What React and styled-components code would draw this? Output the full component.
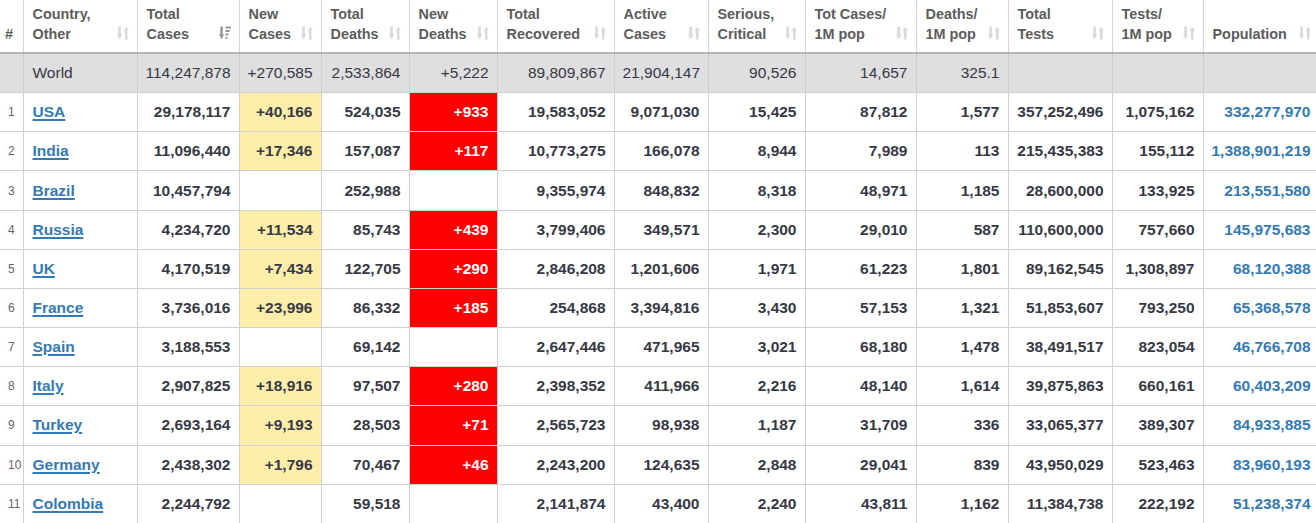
import styled, { createGlobalStyle } from "styled-components";

const Global = createGlobalStyle`
  html, body {
    margin: 0;
    padding: 0;
    background: #fff;
    overflow: hidden;
  }
  body {
    font-family: "Liberation Sans", Arial, sans-serif;
  }
`;

const Tabla = styled.table`
  width: 1319px;
  table-layout: fixed;
  border-collapse: collapse;
  font-family: "Liberation Sans", Arial, sans-serif;
`;

const Cabecera = styled.th`
  height: 40px;
  padding: 4px 8px 8px ${(p) => (p.$num ? "5px" : "9px")};
  border-left: 1px solid #d6d6d6;
  border-bottom: 2px solid #b4b4b4;
  vertical-align: bottom;
  text-align: left;
  font-size: 14.4px;
  font-weight: 700;
  line-height: 20px;
  color: #5c5c5c;

  &:first-child {
    border-left: none;
  }
`;

const CntCabecera = styled.div`
  display: flex;
  align-items: flex-end;
  justify-content: space-between;
  gap: 4px;

  svg {
    flex-shrink: 0;
    margin-bottom: 4px;
  }
`;

const Fila = styled.tr`
  background: ${(p) => (p.$mundo ? "#dfdfdf" : "#fff")};
`;

const Celda = styled.td`
  height: 38.17px;
  padding: 0 8px;
  border: 1px solid #cfcfcf;
  border-top: none;
  vertical-align: middle;
  text-align: right;
  white-space: nowrap;
  font-size: 15.5px;
  line-height: 18px;
  font-weight: ${(p) => (p.$mundo ? 400 : 700)};
  color: ${(p) => (p.$rojo ? "#fff" : "#363945")};
  background: ${(p) => (p.$rojo ? "#ff0000" : p.$amarillo ? "#ffeeaa" : "transparent")};

  &:first-child {
    border-left: none;
  }
`;

const Numero = styled.td`
  padding: 0 0 0 2px;
  border-bottom: 1px solid #cfcfcf;
  text-align: left;
  vertical-align: middle;
  font-size: 12px;
  color: #666;
  text-indent: 6px;
`;

const Pais = styled(Celda)`
  text-align: left;
  padding-left: 9px;
`;

const Enlace = styled.a`
  color: #337ab7;
  font-weight: 700;
  text-decoration: underline;
  text-decoration-thickness: 2px;
  text-underline-offset: 2px;
`;

const Poblacion = styled.span`
  color: #337ab7;
`;

const IconoOrden = ({ activo }) =>
  activo ? (
    <svg width="12" height="14" viewBox="0 0 12 14">
      <g fill="#9a9a9a">
        <rect x="1.3" y="0.5" width="2.6" height="8.5" />
        <polygon points="0,8.5 5.2,8.5 2.6,13.5" />
        <rect x="6.5" y="0.5" width="5.5" height="2" />
        <rect x="6.5" y="4" width="4.2" height="2" />
        <rect x="6.5" y="7.5" width="3" height="2" />
        <rect x="6.5" y="11" width="1.8" height="2" />
      </g>
    </svg>
  ) : (
    <svg width="12" height="14" viewBox="0 0 12 14">
      <g fill="#d9d9d9">
        <rect x="1.3" y="0.5" width="2.6" height="8.5" />
        <polygon points="0,8.5 5.2,8.5 2.6,13.5" />
        <polygon points="6.6,5 11.8,5 9.2,0.5" />
        <rect x="7.9" y="5" width="2.6" height="8.5" />
      </g>
    </svg>
  );

const columnas = [
  { ancho: 23, titulo: ["#"] },
  { ancho: 114, titulo: ["Country,", "Other"] },
  { ancho: 102, titulo: ["Total", "Cases"], activo: true },
  { ancho: 82, titulo: ["New", "Cases"] },
  { ancho: 88, titulo: ["Total", "Deaths"] },
  { ancho: 88, titulo: ["New", "Deaths"] },
  { ancho: 117, titulo: ["Total", "Recovered"] },
  { ancho: 94, titulo: ["Active", "Cases"] },
  { ancho: 97, titulo: ["Serious,", "Critical"] },
  { ancho: 111, titulo: ["Tot Cases/", "1M pop"] },
  { ancho: 92, titulo: ["Deaths/", "1M pop"] },
  { ancho: 104, titulo: ["Total", "Tests"] },
  { ancho: 91, titulo: ["Tests/", "1M pop"] },
  { ancho: 116, titulo: ["Population"] },
];

const mundo = ["114,247,878", "+270,585", "2,533,864", "+5,222", "89,809,867", "21,904,147", "90,526", "14,657", "325.1", "", "", ""];

const paises = [
  ["USA", "29,178,117", "+40,166", "524,035", "+933", "19,583,052", "9,071,030", "15,425", "87,812", "1,577", "357,252,496", "1,075,162", "332,277,970"],
  ["India", "11,096,440", "+17,346", "157,087", "+117", "10,773,275", "166,078", "8,944", "7,989", "113", "215,435,383", "155,112", "1,388,901,219"],
  ["Brazil", "10,457,794", "", "252,988", "", "9,355,974", "848,832", "8,318", "48,971", "1,185", "28,600,000", "133,925", "213,551,580"],
  ["Russia", "4,234,720", "+11,534", "85,743", "+439", "3,799,406", "349,571", "2,300", "29,010", "587", "110,600,000", "757,660", "145,975,683"],
  ["UK", "4,170,519", "+7,434", "122,705", "+290", "2,846,208", "1,201,606", "1,971", "61,223", "1,801", "89,162,545", "1,308,897", "68,120,388"],
  ["France", "3,736,016", "+23,996", "86,332", "+185", "254,868", "3,394,816", "3,430", "57,153", "1,321", "51,853,607", "793,250", "65,368,578"],
  ["Spain", "3,188,553", "", "69,142", "", "2,647,446", "471,965", "3,021", "68,180", "1,478", "38,491,517", "823,054", "46,766,708"],
  ["Italy", "2,907,825", "+18,916", "97,507", "+280", "2,398,352", "411,966", "2,216", "48,140", "1,614", "39,875,863", "660,161", "60,403,209"],
  ["Turkey", "2,693,164", "+9,193", "28,503", "+71", "2,565,723", "98,938", "1,187", "31,709", "336", "33,065,377", "389,307", "84,933,885"],
  ["Germany", "2,438,302", "+1,796", "70,467", "+46", "2,243,200", "124,635", "2,848", "29,041", "839", "43,950,029", "523,463", "83,960,193"],
  ["Colombia", "2,244,792", "", "59,518", "", "2,141,874", "43,400", "2,240", "43,811", "1,162", "11,384,738", "222,192", "51,238,374"],
];

const App = () => {
  return (
    <>
      <Global />
      <Tabla>
        <colgroup>
          {columnas.map((c, i) => (
            <col key={i} style={{ width: c.ancho }} />
          ))}
        </colgroup>
        <thead>
          <tr>
            {columnas.map((c, i) => (
              <Cabecera key={i} $num={i === 0}>
                {i === 0 ? (
                  "#"
                ) : (
                  <CntCabecera>
                    <span>
                      {c.titulo.map((t, j) => (
                        <span key={j}>
                          {j > 0 && <br />}
                          {t}
                        </span>
                      ))}
                    </span>
                    <IconoOrden activo={c.activo} />
                  </CntCabecera>
                )}
              </Cabecera>
            ))}
          </tr>
        </thead>
        <tbody>
          <Fila $mundo>
            <Numero />
            <Pais $mundo>World</Pais>
            {mundo.map((v, i) => (
              <Celda key={i} $mundo>
                {v}
              </Celda>
            ))}
            <Celda $mundo />
          </Fila>
          {paises.map((fila, n) => {
            const [nombre, ...valores] = fila;
            return (
              <Fila key={nombre}>
                <Numero>{n + 1}</Numero>
                <Pais>
                  <Enlace href="#">{nombre}</Enlace>
                </Pais>
                {valores.map((v, i) => (
                  <Celda key={i} $amarillo={i === 1 && v !== ""} $rojo={i === 3 && v !== ""}>
                    {i === valores.length - 1 ? <Poblacion>{v}</Poblacion> : v}
                  </Celda>
                ))}
              </Fila>
            );
          })}
        </tbody>
      </Tabla>
    </>
  );
};

export default App;
